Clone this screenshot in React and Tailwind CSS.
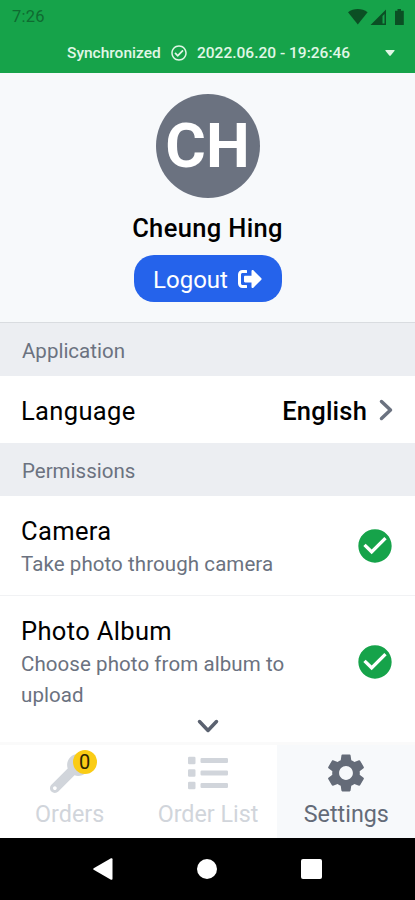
import { FaWrench, FaList, FaSignOutAlt, FaRegCheckCircle } from 'react-icons/fa'
import { MdCheckCircle, MdSettings } from 'react-icons/md'

const permissions = [
  { title: 'Camera', description: 'Take photo through camera', height: 'h-[100px]' },
  { title: 'Photo Album', description: 'Choose photo from album to upload', height: 'h-[131px]' },
]

const StatusBar = () => (
  <div className="flex h-[34px] items-center justify-between pl-3 pr-[9px] text-[#0b4f24]">
    <span className="text-[16.500px] leading-none tracking-[0.2px] text-[#0f6b31]">7:26</span>
    <svg className="h-[18px] w-[58px]" viewBox="0 0 58 18" fill="currentColor">
      <path d="M0 4.2C5.5-.2 14-.2 19.6 4.2L9.8 16.5z" />
      <path fillRule="evenodd" d="M22.500 17L38 1.500V17zM34.500 8v7.500h2V6z" />
      <path d="M49.500 1h3.500v1.800h2.800v14.200H47V2.800h2.500z" />
    </svg>
  </div>
)

const SyncBar = () => (
  <div className="flex h-[39px] items-center pl-[67px] pr-5 text-[15.500px] font-medium text-[#e0f7e6]">
    <span className="w-[94px] whitespace-nowrap">Synchronized</span>
    <FaRegCheckCircle className="-mt-[2px] ml-[10px] h-4 w-4" />
    <span className="ml-[10px] whitespace-nowrap">2022.06.20 - 19:26:46</span>
    <svg className="-mt-[2px] ml-auto h-[6px] w-[10px]" viewBox="0 0 10 6" fill="currentColor">
      <path d="M1 0h8q1.200 0 .4 1L5.700 5.600q-.7.700-1.400 0L.6 1Q-.2 0 1 0z" />
    </svg>
  </div>
)

const Profile = () => (
  <div className="flex h-[250px] flex-col items-center border-b border-[#d9dce0] bg-[#f7f9fb] pt-[21px]">
    <div className="flex h-[104px] w-[104px] items-center justify-center rounded-full bg-[#6b7280] text-[62px] font-bold leading-none text-white">
      CH
    </div>
    <h1 className="mt-[14px] text-[25.500px] font-medium leading-[32px] tracking-[0.350px] text-black">Cheung Hing</h1>
    <button className="mt-[11px] flex h-[47px] w-[148px] items-center justify-center rounded-[20px] bg-[#2563eb] text-[24px] text-white">
      <span className="mt-[3px]">Logout</span>
      <FaSignOutAlt className="ml-[10px] h-6 w-6" />
    </button>
  </div>
)

const SectionTitle = ({ children }) => (
  <h2 className="flex h-[53px] items-center bg-[#eceef2] pl-[22px] pt-1 text-[20.500px] text-[#6b7280]">
    {children}
  </h2>
)

const Chevron = ({ className }) => (
  <svg
    className={className}
    viewBox="0 0 14 22"
    fill="none"
    stroke="currentColor"
    strokeWidth="3.5"
    strokeLinecap="round"
    strokeLinejoin="round"
  >
    <path d="M2.500 2.500l9 8.500-9 8.500" />
  </svg>
)

const Permission = ({ title, description, height }) => (
  <div
    className={`flex items-center justify-between border-b border-[#f1f2f4] pl-[21px] pr-5 last:border-b-0 ${height}`}
  >
    <div className="w-[280px] pt-[2px]">
      <h3 className="text-[25.500px] leading-[34px] tracking-[0.350px] text-black">{title}</h3>
      <p className="mt-px text-[20.500px] leading-[31px] tracking-[0.080px] text-[#6b7280]">{description}</p>
    </div>
    <MdCheckCircle className="h-10 w-10 text-[#16a34a]" />
  </div>
)

const Tab = ({ active, icon, label }) => (
  <div
    className={`flex flex-1 flex-col items-center pt-[6px] ${active ? 'bg-[#f7f9fb] text-[#646b78]' : 'text-[#d1d5db]'}`}
  >
    <div className="relative flex h-[44px] items-center justify-center">{icon}</div>
    <span className="mt-[3px] whitespace-nowrap pl-px text-[23.300px] leading-[32px]">{label}</span>
  </div>
)

const TabBar = () => (
  <div className="flex h-[96px] border-t-[3px] border-[#fafafa] bg-white">
    <Tab
      label="Orders"
      icon={
        <>
          <FaWrench className="h-[39px] w-[39px]" />
          <span className="absolute -right-[8px] -top-[1px] flex h-[24px] w-[24px] items-center justify-center rounded-full bg-[#facc15] text-[20px] leading-none text-[#2b2504]">
            0
          </span>
        </>
      }
    />
    <Tab label="Order List" icon={<FaList className="ml-[2px] h-[40px] w-[40px]" />} />
    <Tab label="Settings" active icon={<MdSettings className="h-[46px] w-[46px]" />} />
  </div>
)

const SystemNav = () => (
  <div className="flex h-[62px] items-center justify-center gap-[84px] bg-black">
    <svg className="h-[22px] w-[20px]" viewBox="0 0 20 22" fill="white">
      <path d="M.7 10.200L18 .3q1.500-.6 1.500 1v19.400q0 1.600-1.500 1L.7 11.800q-1-.8 0-1.600z" />
    </svg>
    <div className="h-[20px] w-[20px] rounded-full bg-white" />
    <div className="h-[20px] w-[21px] rounded-[2px] bg-white" />
  </div>
)

export default function App() {
  return (
    <div className="flex h-[900px] w-[415px] flex-col overflow-hidden bg-white font-['Roboto',sans-serif]">
      <header className="h-[73px] shrink-0 bg-[#16a34a]">
        <StatusBar />
        <SyncBar />
      </header>
      <main className="relative h-[669px] shrink-0">
        <Profile />
        <SectionTitle>Application</SectionTitle>
        <div className="flex h-[67px] items-center justify-between pl-[21px] pr-[22px] pt-1 text-[25.500px] text-black">
          <span className="tracking-[0.350px]">Language</span>
          <div className="flex items-center gap-3">
            <span className="font-medium tracking-[0.2px]">English</span>
            <Chevron className="-mt-1 h-[22px] w-[14px] text-[#6b7280]" />
          </div>
        </div>
        <SectionTitle>Permissions</SectionTitle>
        <div>
          {permissions.map((permission) => (
            <Permission key={permission.title} {...permission} />
          ))}
        </div>
        <Chevron className="absolute bottom-[5px] left-[201px] h-[22px] w-[14px] rotate-90 text-[#5b6270]" />
      </main>
      <TabBar />
      <SystemNav />
    </div>
  )
}
